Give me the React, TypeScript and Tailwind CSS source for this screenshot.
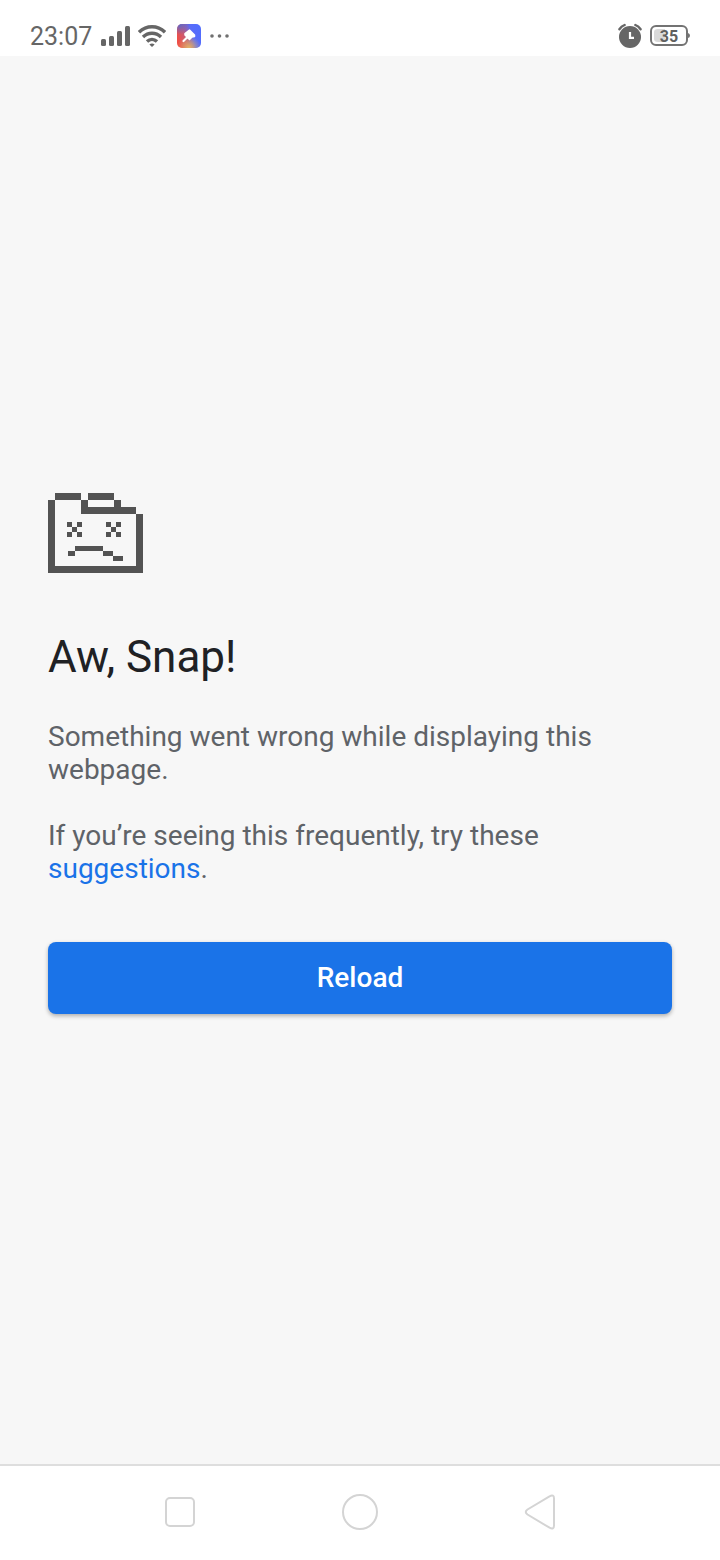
function SignalIcon() {
  return (
    <svg width="30" height="22" viewBox="0 0 30 22" fill="#666666" aria-hidden="true">
      <rect x="1" y="14" width="5" height="7" rx="1.5" />
      <rect x="9" y="11" width="5" height="10" rx="1.5" />
      <rect x="17" y="6" width="5" height="15" rx="1.5" />
      <rect x="25" y="1" width="5" height="20" rx="1.5" />
    </svg>
  );
}

function WifiIcon() {
  return (
    <svg width="28" height="22" viewBox="0 0 28 22" fill="none" stroke="#666666" strokeWidth="3.4" aria-hidden="true">
      <path d="M1 7.2C8.5 0 19.5 0 27 7.2" />
      <path d="M5 12C10.2 7 17.8 7 23 12" />
      <path d="M9 16.6C12 13.8 16 13.8 19 16.6" />
      <path d="M11.4 19.6Q14 17.6 16.6 19.6L14 22Z" fill="#666666" stroke="none" />
    </svg>
  );
}

function AppBadge() {
  return (
    <svg width="24" height="24" viewBox="0 0 24 24" aria-hidden="true">
      <defs>
        <linearGradient id="badge-base" x1="0" y1="0.5" x2="1" y2="0.2">
          <stop offset="0" stopColor="#ee4f48" />
          <stop offset="0.3" stopColor="#c85a76" />
          <stop offset="0.6" stopColor="#5a6cf8" />
          <stop offset="1" stopColor="#506dff" />
        </linearGradient>
        <radialGradient id="badge-glow" cx="0.5" cy="1" r="0.5">
          <stop offset="0" stopColor="#e3b464" />
          <stop offset="1" stopColor="#e3b464" stopOpacity="0" />
        </radialGradient>
        <radialGradient id="badge-corner" cx="0.1" cy="0" r="0.45">
          <stop offset="0" stopColor="#5668d0" />
          <stop offset="1" stopColor="#5668d0" stopOpacity="0" />
        </radialGradient>
      </defs>
      <rect width="24" height="24" rx="5" fill="url(#badge-base)" />
      <rect width="24" height="24" rx="5" fill="url(#badge-corner)" />
      <rect width="24" height="24" rx="5" fill="url(#badge-glow)" />
      <path d="M8 9.5L12.5 6L17.5 11V12.5L15 13L12.5 15.5L8 11Z" fill="#ffffff" stroke="#ffffff" strokeWidth="1.5" strokeLinejoin="round" />
      <path d="M10 13.5L6.5 17" stroke="#ffffff" strokeWidth="2.2" strokeLinecap="round" />
    </svg>
  );
}

function DotsIcon() {
  return (
    <svg width="22" height="24" viewBox="0 0 22 24" fill="#707070" aria-hidden="true">
      <circle cx="3" cy="12" r="1.8" />
      <circle cx="10.5" cy="12" r="1.8" />
      <circle cx="18" cy="12" r="1.8" />
    </svg>
  );
}

function AlarmIcon() {
  return (
    <svg width="24" height="26" viewBox="0 0 24 26" fill="none" strokeLinecap="round" aria-hidden="true">
      <circle cx="12" cy="14" r="11" fill="#666666" />
      <path d="M1.4 6.2Q3.4 3.3 6.6 2M22.6 6.2Q20.6 3.3 17.4 2" stroke="#666666" strokeWidth="2.4" />
      <path d="M12 9V14.8H16" stroke="#ffffff" strokeWidth="2.2" strokeLinecap="butt" />
    </svg>
  );
}

function BatteryIcon() {
  return (
    <svg width="40" height="22" viewBox="0 0 40 22" role="img" aria-label="Battery 35%">
      <rect x="1" y="1" width="36" height="19" rx="5" fill="#ffffff" stroke="#737373" strokeWidth="2" />
      <path d="M8 4H15V17H8Q4 17 4 14V7Q4 4 8 4Z" fill="#d9d9d9" />
      <path d="M38 8Q40 8.500 40 10.500Q40 12.500 38 13Z" fill="#737373" />
      <text x="19" y="17" textAnchor="middle" className="fill-[#606060] font-['Roboto',sans-serif] text-[16px] font-bold">
        35
      </text>
    </svg>
  );
}

function SadFolder() {
  return (
    <svg width="95" height="80" viewBox="0 0 95 80" fill="#535353" shapeRendering="crispEdges" aria-hidden="true">
      {/* Folder */}
      <path d="M7 0H33V7H7ZM40 0H66V7H40ZM66 7H73V14H66ZM33 7H40V14H88V21H33Z" />
      <path d="M0 7H7V73H88V21H95V80H0Z" />
      {/* Eyes */}
      <path d="M19 29H24V34H19ZM29 29H34V34H29ZM24 34H29V39H24ZM19 39H24V44H19ZM29 39H34V44H29Z" />
      <path d="M58 29H63V34H58ZM68 29H73V34H68ZM63 34H68V39H63ZM58 39H63V44H58ZM68 39H73V44H68Z" />
      {/* Mouth */}
      <path d="M27 53H55V58H27ZM20 58H27V63H20ZM55 58H65V63H55ZM65 63H75V68H65Z" />
    </svg>
  );
}

export default function App() {
  return (
    <div className="flex min-h-screen flex-col bg-[#f7f7f7] font-['Roboto',sans-serif]">
      {/* Status bar */}
      <header className="flex h-14 items-center justify-between bg-white px-[30px] pt-4 text-[#666666]">
        <div className="flex items-center gap-2">
          <span className="pt-0.5 text-[25px] leading-8">23:07</span>
          <SignalIcon />
          <WifiIcon />
          <div className="flex items-center gap-2 pl-[3px]">
            <AppBadge />
            <DotsIcon />
          </div>
        </div>
        <div className="flex items-center gap-2">
          <AlarmIcon />
          <BatteryIcon />
        </div>
      </header>

      {/* Crash message */}
      <main className="flex-1 px-12 pt-[437px]">
        <SadFolder />
        <h1 className="mt-14 text-[44px] leading-14 text-[#202124]">Aw, Snap!</h1>
        <p className="mt-[35px] text-[28px] leading-[33px] text-[#5f6368]">
          Something went wrong while displaying this webpage.
        </p>
        <p className="mt-[33px] text-[28px] leading-[33px] text-[#5f6368]">
          If you’re seeing this frequently, try these{' '}
          <a href="#suggestions" className="text-[#1a73e8]">
            suggestions
          </a>
          .
        </p>
        <button
          type="button"
          className="mt-[57px] h-18 w-full rounded-lg bg-[#1a73e8] text-[28px] font-medium text-white shadow-[0_2px_4px_rgba(0,0,0,0.3)]"
        >
          Reload
        </button>
      </main>

      {/* Navigation bar */}
      <nav className="grid h-24 grid-cols-[1fr_180px_180px_180px_1fr] items-center justify-items-center border-t-2 border-[#dedede] bg-white pb-0.5">
        <button type="button" aria-label="Recent apps" className="col-start-2">
          <svg width="36" height="36" viewBox="0 0 36 36" fill="none" stroke="#d4d4d4" strokeWidth="2">
            <rect x="4" y="4" width="28" height="28" rx="4" />
          </svg>
        </button>
        <button type="button" aria-label="Home">
          <svg width="36" height="36" viewBox="0 0 36 36" fill="none" stroke="#d4d4d4" strokeWidth="2">
            <circle cx="18" cy="18" r="17" />
          </svg>
        </button>
        <button type="button" aria-label="Back">
          <svg width="36" height="36" viewBox="0 0 36 36" fill="none" stroke="#d4d4d4" strokeWidth="2">
            <path d="M5.500 15.500L27.500 2.300Q32 0 32 4.500V31.500Q32 36 27.500 33.700L5.500 20.500Q2 18 5.500 15.500Z" />
          </svg>
        </button>
      </nav>
    </div>
  );
}
